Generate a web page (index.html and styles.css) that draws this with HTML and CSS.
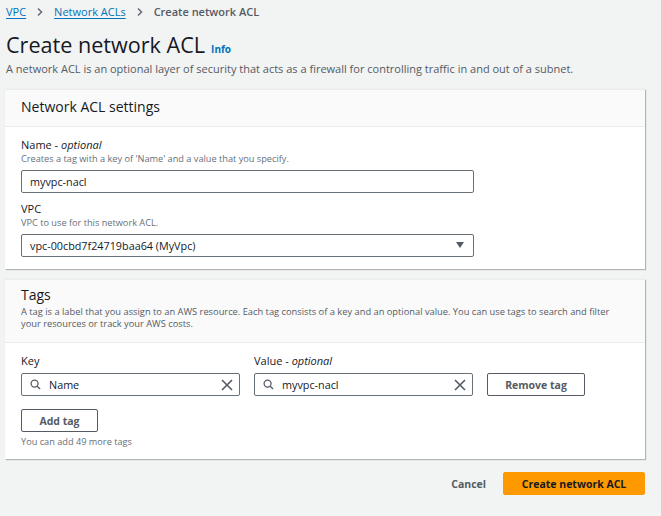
FILE: index.html
```html
<!DOCTYPE html>
<html lang="en">
<head>
<meta charset="utf-8">
<link rel="stylesheet" href="styles.css">
</head>
<body>
<div class="page">
  <nav class="crumbs">
    <a class="crumb-link" href="#">VPC</a>
    <svg class="chev" viewBox="0 0 10 10" width="10" height="10"><path d="M3 1.5 L6.5 5 L3 8.5" fill="none" stroke="#687078" stroke-width="1.6"/></svg>
    <a class="crumb-link" href="#">Network ACLs</a>
    <svg class="chev" viewBox="0 0 10 10" width="10" height="10"><path d="M3 1.5 L6.5 5 L3 8.5" fill="none" stroke="#687078" stroke-width="1.6"/></svg>
    <span class="crumb-current">Create network ACL</span>
  </nav>

  <div class="title-row">
    <h1 class="title">Create network ACL</h1>
    <a class="info" href="#">Info</a>
  </div>
  <p class="lead">A network ACL is an optional layer of security that acts as a firewall for controlling traffic in and out of a subnet.</p>

  <section class="panel">
    <div class="panel-head">
      <h2 class="panel-title">Network ACL settings</h2>
    </div>
    <div class="panel-body settings-body">
      <div class="field">
        <div class="label">Name - <em>optional</em></div>
        <div class="hint">Creates a tag with a key of 'Name' and a value that you specify.</div>
        <div class="input wide">myvpc-nacl</div>
      </div>
      <div class="field">
        <div class="label">VPC</div>
        <div class="hint">VPC to use for this network ACL.</div>
        <div class="input wide select">
          <span>vpc-00cbd7f24719baa64 (MyVpc)</span>
          <svg viewBox="0 0 8 7" width="8" height="7"><path d="M0 0 H8 L4 6 Z" fill="#545b64"/></svg>
        </div>
      </div>
    </div>
  </section>

  <section class="panel">
    <div class="panel-head tags-head">
      <h2 class="panel-title">Tags</h2>
      <p class="head-desc">A tag is a label that you assign to an AWS resource. Each tag consists of a key and an optional value. You can use tags to search and filter your resources or track your AWS costs.</p>
    </div>
    <div class="panel-body tags-body">
      <div class="tag-row">
        <div class="tag-col">
          <div class="label">Key</div>
          <div class="input search">
            <svg class="ico" viewBox="0 0 12 12" width="11" height="11"><circle cx="5" cy="5" r="3.8" fill="none" stroke="#545b64" stroke-width="1.4"/><path d="M7.8 7.8 L11 11" stroke="#545b64" stroke-width="1.5"/></svg>
            <span class="val">Name</span>
            <svg class="clr" viewBox="0 0 12 12" width="12" height="12"><path d="M1 1 L11 11 M11 1 L1 11" stroke="#545b64" stroke-width="1.6"/></svg>
          </div>
        </div>
        <div class="tag-col">
          <div class="label">Value - <em>optional</em></div>
          <div class="input search">
            <svg class="ico" viewBox="0 0 12 12" width="11" height="11"><circle cx="5" cy="5" r="3.8" fill="none" stroke="#545b64" stroke-width="1.4"/><path d="M7.8 7.8 L11 11" stroke="#545b64" stroke-width="1.5"/></svg>
            <span class="val">myvpc-nacl</span>
            <svg class="clr" viewBox="0 0 12 12" width="12" height="12"><path d="M1 1 L11 11 M11 1 L1 11" stroke="#545b64" stroke-width="1.6"/></svg>
          </div>
        </div>
        <button class="btn remove">Remove tag</button>
      </div>
      <button class="btn add">Add tag</button>
      <div class="hint more">You can add 49 more tags</div>
    </div>
  </section>

  <div class="actions">
    <a class="cancel" href="#">Cancel</a>
    <button class="btn primary">Create network ACL</button>
  </div>
</div>
</body>
</html>
```

FILE: styles.css
```css
* { box-sizing: border-box; }
html, body { margin: 0; padding: 0; }
body {
  background: #f2f3f3;
  font-family: "Open Sans", "Noto Sans", sans-serif;
  color: #16191f;
  width: 661px;
  height: 516px;
  overflow: hidden;
}
.page { padding: 4px 16px 0 5px; }

.crumbs {
  display: flex;
  align-items: center;
  gap: 9px;
  font-size: 11px;
  line-height: 16px;
  padding-left: 1px;
}
.crumb-link { color: #0073bb; text-decoration: underline; text-underline-offset: 2px; }
.crumb-current { color: #545b64; font-weight: 600; }
.chev { display: block; }

.title-row { display: flex; align-items: baseline; gap: 6px; margin-top: 11px; padding-left: 1px; }
.title { margin: 0; font-size: 21.6px; font-weight: 400; line-height: 28px; color: #16191f; }
.info { color: #0073bb; font-size: 10px; font-weight: 700; text-decoration: none; }
.lead { margin: 2px 0 0 0; font-size: 11px; line-height: 16px; color: #545b64; padding-left: 1px; }

.panel {
  background: #fff;
  border-top: 1px solid #eaeded;
  box-shadow: 1px 1px 1px rgba(0,0,0,0.25), 0 0 1px rgba(0,0,0,0.08);
  margin-top: 12px;
}
.panel + .panel { margin-top: 10px; }
.panel-head {
  background: #fafafa;
  border-bottom: 1px solid #eaeded;
  padding: 7px 16px 9px 16px;
}
.panel-title { margin: 0; font-size: 14px; font-weight: 400; line-height: 20px; color: #16191f; }
.tags-head { padding: 5px 16px 12px 16px; }
.head-desc { margin: 1px 0 0 0; font-size: 9.3px; line-height: 12px; color: #545b64; }

.panel-body { padding: 10px 16px 12px 16px; }
.settings-body { display: flex; flex-direction: column; gap: 8px; }
.label { font-size: 11px; line-height: 15px; color: #16191f; }
.hint { font-size: 9.2px; line-height: 13px; color: #687078; }
.input {
  height: 23px;
  border: 1px solid #687078;
  border-radius: 2px;
  background: #fff;
  font-size: 10.8px;
  color: #16191f;
  display: flex;
  align-items: center;
  padding: 0 8px;
  margin-top: 5px;
}
.wide { width: 453px; }
.select { justify-content: space-between; padding-right: 9px; }

.tags-body { padding: 10px 16px 11px 16px; }
.tag-row { display: flex; align-items: flex-end; gap: 14px; }
.tag-col { width: 219px; }
.search { padding: 0 6px 0 8px; gap: 8px; }
.search .val { flex: 1; }
.ico, .clr { display: block; flex: none; }

.btn {
  font-family: "Open Sans", "Noto Sans", sans-serif;
  font-weight: 700;
  font-size: 10.5px;
  color: #545b64;
  background: #fff;
  border: 1px solid #545b64;
  border-radius: 2px;
  height: 23px;
  padding: 0 16px;
  cursor: pointer;
}
.remove { width: 98px; }
.add { margin-top: 13px; width: 77px; padding: 0; display: block; }
.more { margin-top: 3px; }

.actions { display: flex; justify-content: flex-end; align-items: center; gap: 17px; margin-top: 13px; }
.cancel { color: #545b64; font-weight: 700; font-size: 10.5px; text-decoration: none; }
.primary { background: #ff9900; border-color: #ff9900; color: #16191f; width: 142px; height: 23px; }
```
